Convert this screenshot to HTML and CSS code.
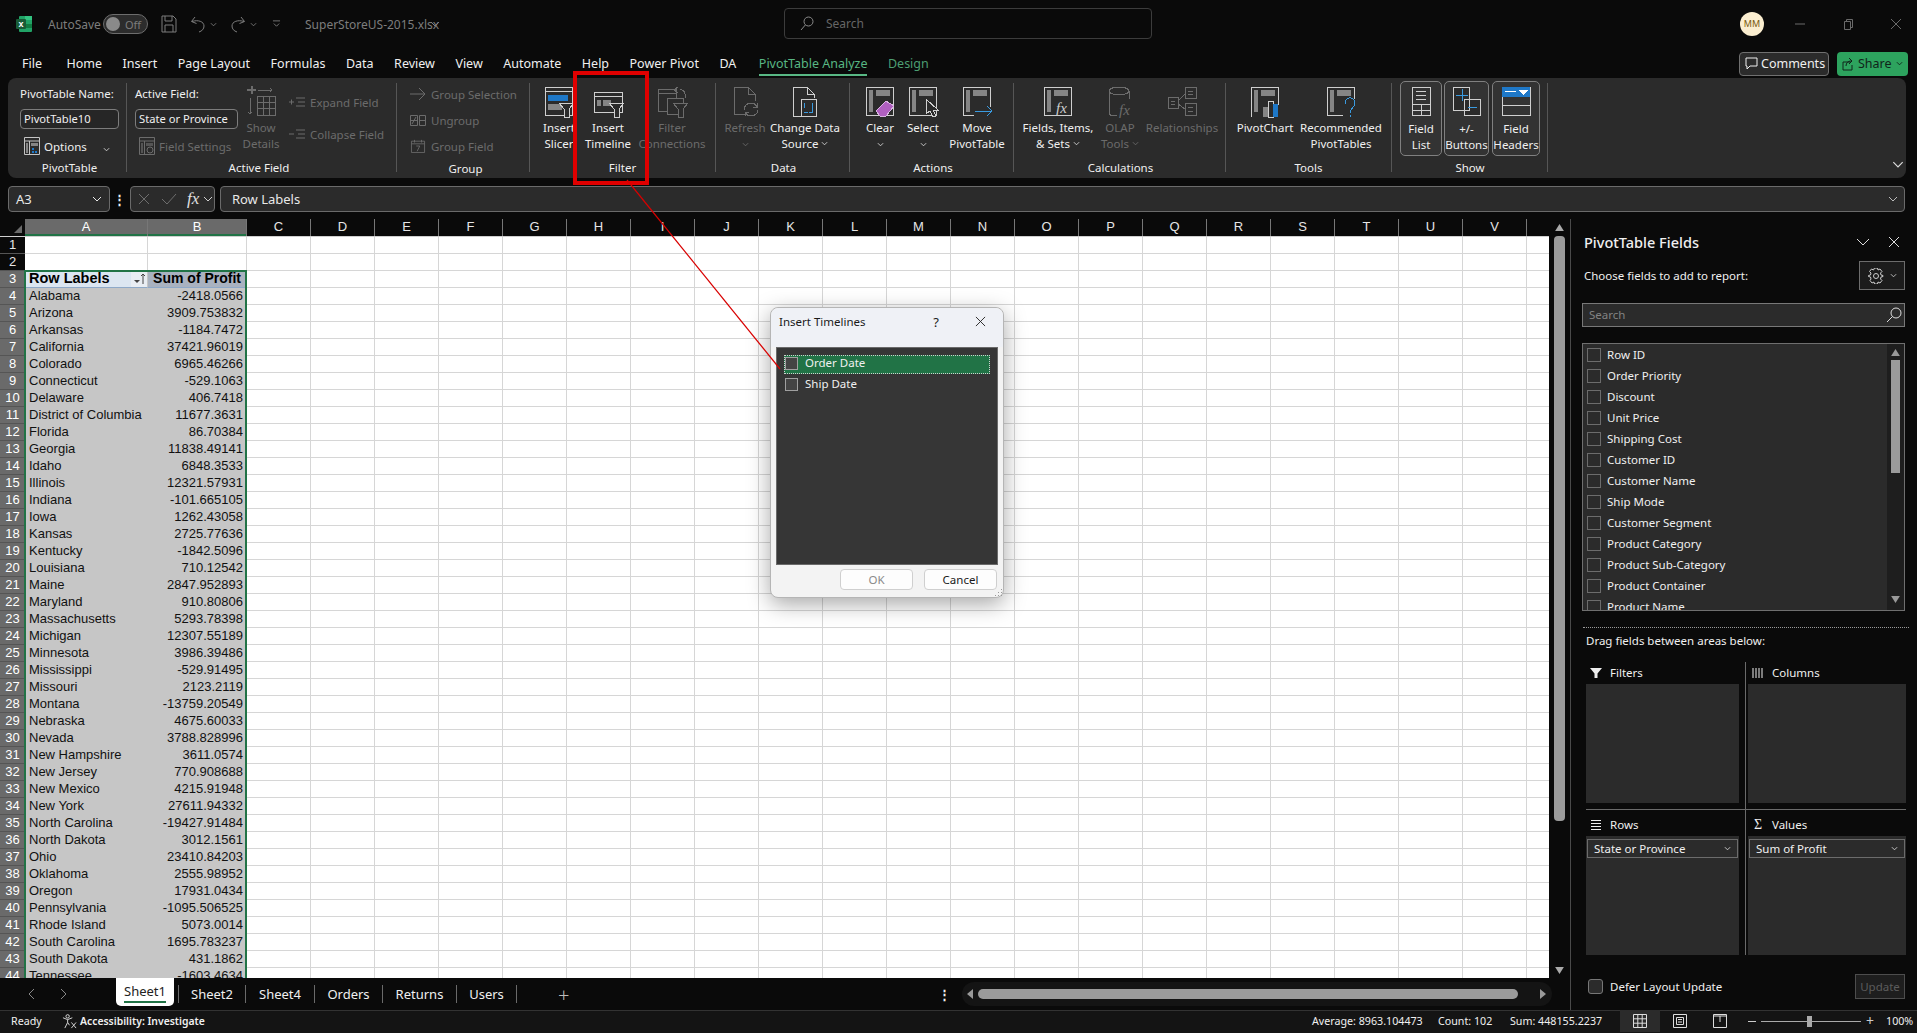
FILE: index.html
```html
<!DOCTYPE html>
<html lang="en">
<head>
    <meta charset="UTF-8">
    <title>SuperStoreUS-2015.xlsx - Excel</title>
    <link rel="stylesheet" href="styles.css">
</head>
<body>

    <!-- title bar -->
    <div class="titlebar">
        <svg class="xl-logo" viewBox="0 0 16 16"><rect x="3" width="13" height="16" rx="1" fill="#21a366"/><rect x="3" y="8" width="13" height="4" fill="#107c41"/><rect x="9" y="0" width="7" height="4" fill="#33c481"/><rect y="3" width="10" height="10" rx="1" fill="#185c37"/><text x="5" y="11" class="xl-x">x</text></svg>
        <span class="autosave">AutoSave</span>
        <span class="toggle"><i></i><b>Off</b></span>
        <svg class="qa save" viewBox="0 0 16 18"><path d="M1 1h11l3 3v13H1zM4 1v5h7V1M4 17v-7h8v7"/></svg>
        <svg class="qa undo" viewBox="0 0 16 18"><path d="M5 2L1.500 6.500l5 2M2 6.500c6-2 12 0 12 4.500 0 3-2 5-5 6"/></svg>
        <svg class="qa-chev" viewBox="0 0 8 5"><path d="M1 1l3 3 3-3"/></svg>
        <svg class="qa redo" viewBox="0 0 16 18"><path d="M11 2l3.500 4.500-5 2M14 6.500c-6-2-12 0-12 4.500 0 3 2 5 5 6"/></svg>
        <svg class="qa-chev" viewBox="0 0 8 5"><path d="M1 1l3 3 3-3"/></svg>
        <svg class="qa-more" viewBox="0 0 10 9"><path d="M1 1h8M2 4l3 3 3-3"/></svg>
        <span class="filename">SuperStoreUS-2015.xlsx</span>
        <svg class="qa-chev file-chev" viewBox="0 0 10 6"><path d="M1 1l4 4 4-4"/></svg>
        <div class="search">
            <svg viewBox="0 0 14 15"><circle cx="8.500" cy="5.500" r="4.500"/><path d="M5.300 9L1 14"/></svg>
            <span>Search</span>
        </div>
        <div class="avatar">MM</div>
        <div class="winctl">
            <svg viewBox="0 0 12 12"><path d="M1 6h10"/></svg>
            <svg viewBox="0 0 12 12"><path d="M2.500 3.500h6v8h-6zM4.500 3.500v-2h6v8h-2"/></svg>
            <svg viewBox="0 0 12 12"><path d="M1 1l10 10M11 1L1 11"/></svg>
        </div>
    </div>

    <!-- ribbon tabs -->
    <div class="tabs">
        <span class="tab-file">File</span><span>Home</span><span>Insert</span><span>Page Layout</span><span>Formulas</span><span>Data</span><span>Review</span><span>View</span><span>Automate</span><span>Help</span><span>Power Pivot</span><span>DA</span>
        <span class="tab-active">PivotTable Analyze</span><span class="tab-ctx">Design</span>
        <div class="tabs-right">
            <div class="comments">
                <svg viewBox="0 0 13 13"><path d="M1 1h11v8H5l-3 3V9H1z"/></svg>Comments
            </div>
            <div class="share">
                <svg viewBox="0 0 12 14"><path d="M8 5H1v8h9V8M4 9c0-3 2-5 5-5M7 1l3 3-3 3"/></svg>Share
                <svg class="share-chev" viewBox="0 0 8 5"><path d="M1 1l3 3 3-3"/></svg>
            </div>
        </div>
    </div>

    <!-- ribbon -->
    <div class="ribbon">

        <div class="group g-pivot">
            <div class="group-body col">
                <div class="mini-label">PivotTable Name:</div>
                <div class="mini-input w-name">PivotTable10</div>
                <div class="mini-row options">
                    <svg class="mini-ico" viewBox="0 0 16 18"><path d="M.500.500h15v17H.500zM.500 4h15M5.500 4v13.500"/><path class="grey" d="M2 6h2v10H2zM7 6h7v3H7z"/><path class="blue" d="M8 11h2v2H8zM11 14h2v2h-2zM8 14h2v2H8z"/></svg>
                    <span>Options</span>
                    <svg class="small-chev opt-chev" viewBox="0 0 8 5"><path d="M1 1l3 3 3-3"/></svg>
                </div>
            </div>
            <div class="group-label">PivotTable</div>
        </div>

        <div class="group g-field">
            <div class="group-body">
                <div class="col field-col">
                    <div class="mini-label">Active Field:</div>
                    <div class="mini-input w-field">State or Province</div>
                    <div class="mini-row off settings">
                        <svg class="mini-ico" viewBox="0 0 16 18"><path d="M.500.500h15v17H.500zM.500 4h15M5.500 4v13.500"/><path class="grey" d="M2 6h2v10H2zM7 6h7v3H7z"/><circle cx="11" cy="13" r="3"/></svg>
                        <span>Field Settings</span>
                    </div>
                </div>
                <div class="bigbtn off w46">
                    <svg class="ico" viewBox="0 0 34 32"><path class="plus" d="M3 4h9M7.500 0v8"/><path d="M14 4h14M26 2l2 2-2 2M6 12v16M4 26l2 2 2-2M13 10h18v19H13zM13 16h18M13 22h18M19 10v19M25 10v19"/></svg>
                    <span>Show</span><span>Details</span>
                </div>
                <div class="col expand-col">
                    <div class="mini-row off"><svg class="mini-ico wide" viewBox="0 0 16 14"><path d="M0 7h5M2.500 4.500v5M7 3h9M9 7h7M7 11h9"/></svg><span>Expand Field</span></div>
                    <div class="mini-row off"><svg class="mini-ico wide" viewBox="0 0 16 14"><path d="M0 7h5M7 3h9M9 7h7M7 11h9"/></svg><span>Collapse Field</span></div>
                </div>
            </div>
            <div class="group-label">Active Field</div>
        </div>

        <div class="group g-group">
            <div class="group-body col group-col">
                <div class="mini-row off"><svg class="mini-ico wide" viewBox="0 0 16 14"><path d="M0 7h15M9 1l6 6-6 6"/></svg><span>Group Selection</span></div>
                <div class="mini-row off"><svg class="mini-ico wide" viewBox="0 0 16 14"><path d="M.500 2.500h7v10h-7zM9.500 2.500h6v10h-6zM9.500 7.500h6M.500 7.500h7M2 11l4-7"/></svg><span>Ungroup</span></div>
                <div class="mini-row off"><svg class="mini-ico wide" viewBox="0 0 16 16"><path d="M.500 2.500h15v13H.500zM.500 5.500h15M4 1v3M12 1v3M6 8h4l-3 6"/></svg><span>Group Field</span></div>
            </div>
            <div class="group-label">Group</div>
        </div>

        <div class="group g-filter">
            <div class="group-body">
                <div class="bigbtn w50">
                    <svg class="ico" viewBox="0 0 34 32"><path d="M3 1h27v28H3zM3 5h27"/><rect class="blue" x="6" y="9" width="20" height="6"/><rect class="grey" x="6" y="18" width="14" height="6"/><path class="funnel" d="M17 17h15l-5 6v8h-5v-8z"/></svg>
                    <span>Insert</span><span>Slicer</span>
                </div>
                <div class="bigbtn w48">
                    <svg class="ico" viewBox="0 0 34 32"><path d="M3 6h28v20H3zM3 10h28"/><rect class="grey" x="6" y="14" width="4" height="6"/><rect class="grey" x="12" y="14" width="8" height="6"/><path class="funnel" d="M18 17h15l-5 6v8h-5v-8z"/></svg>
                    <span>Insert</span><span>Timeline</span>
                </div>
                <div class="bigbtn off w80">
                    <svg class="ico" viewBox="0 0 34 32"><path d="M3 3h18v22H3zM3 7h18M25 3c4 1 6 4 5 9M19 4l4-3M19 4l4 3"/><path class="funnel" d="M12 12h16v16H12z"/><path class="funnel" d="M18 17h15l-5 6v8h-5v-8z"/></svg>
                    <span>Filter</span><span>Connections</span>
                </div>
            </div>
            <div class="group-label filter-label">Filter</div>
        </div>

        <div class="group g-data">
            <div class="group-body">
                <div class="bigbtn off w50">
                    <svg class="ico" viewBox="0 0 34 32"><path d="M18 28H6V1h14l7 7v7M20 1v7h7M16 24c0-4 3-7 7-7 3 0 5 2 6 4M30 24c0 3-3 6-7 6-3 0-5-2-6-4M29 17v4h-4M17 30v-4h4"/></svg>
                    <span>Refresh</span><svg class="small-chev" viewBox="0 0 8 5"><path d="M1 1l3 3 3-3"/></svg>
                </div>
                <div class="bigbtn w70">
                    <svg class="ico" viewBox="0 0 34 32"><path d="M14 30H5V1h14l7 7v4M19 1v7h7"/><path d="M13 13h15v17H13z"/><path class="blue-line" d="M16 22v-5M16 26h4M24 17v9h-3"/></svg>
                    <span>Change Data</span><span>Source <svg class="small-chev inl" viewBox="0 0 8 5"><path d="M1 1l3 3 3-3"/></svg></span>
                </div>
            </div>
            <div class="group-label">Data</div>
        </div>

        <div class="group g-actions">
            <div class="group-body">
                <div class="bigbtn w44">
                    <svg class="ico" viewBox="0 0 34 32"><path d="M3 1h27v28H3z"/><rect class="grey" x="6" y="4" width="4" height="22"/><rect class="grey" x="13" y="4" width="14" height="6"/><path class="eraser" d="M13 25l10-10 8 5-8 10h-6z"/></svg>
                    <span>Clear</span><svg class="small-chev" viewBox="0 0 8 5"><path d="M1 1l3 3 3-3"/></svg>
                </div>
                <div class="bigbtn w42">
                    <svg class="ico" viewBox="0 0 34 32"><path d="M3 1h27v28H3z"/><rect class="grey" x="6" y="4" width="4" height="22"/><rect class="grey" x="13" y="4" width="14" height="6"/><path class="funnel" d="M20 13v15l4-3 3 6 3-1-3-6h5z"/></svg>
                    <span>Select</span><svg class="small-chev" viewBox="0 0 8 5"><path d="M1 1l3 3 3-3"/></svg>
                </div>
                <div class="bigbtn w66">
                    <svg class="ico" viewBox="0 0 34 32"><path d="M3 1h27v28H3z"/><rect class="grey" x="6" y="4" width="4" height="22"/><rect class="grey" x="13" y="4" width="14" height="6"/><path class="funnel no-line" d="M14 21h20v9H14z"/><path class="blue-line" d="M15 25h17M27 20l5 5-5 5"/></svg>
                    <span>Move</span><span>PivotTable</span>
                </div>
            </div>
            <div class="group-label">Actions</div>
        </div>

        <div class="group g-calc">
            <div class="group-body">
                <div class="bigbtn w80">
                    <svg class="ico" viewBox="0 0 34 32"><path d="M3 1h27v28H3z"/><rect class="grey" x="6" y="4" width="4" height="22"/><rect class="grey" x="13" y="4" width="14" height="6"/><text x="15" y="27" class="fx-small">fx</text></svg>
                    <span>Fields, Items,</span><span>&amp; Sets <svg class="small-chev inl" viewBox="0 0 8 5"><path d="M1 1l3 3 3-3"/></svg></span>
                </div>
                <div class="bigbtn off w44">
                    <svg class="ico" viewBox="0 0 34 32"><ellipse cx="16" cy="5" rx="10" ry="4"/><path d="M6 5v22c0 2 3 3 8 3M26 5v8"/><text x="16" y="29" class="fx-small">fx</text></svg>
                    <span>OLAP</span><span>Tools <svg class="small-chev inl" viewBox="0 0 8 5"><path d="M1 1l3 3 3-3"/></svg></span>
                </div>
                <div class="bigbtn off w80">
                    <svg class="ico" viewBox="0 0 34 32"><path d="M3 11h10v11H3zM20 1h11v11H20zM20 17h11v12H20zM13 15l7-7M13 18l7 5M6 15h4M6 18h4M23 5h5M23 8h5M23 21h5M23 25h5"/></svg>
                    <span>Relationships</span>
                </div>
            </div>
            <div class="group-label">Calculations</div>
        </div>

        <div class="group g-tools">
            <div class="group-body">
                <div class="bigbtn w64">
                    <svg class="ico" viewBox="0 0 34 32"><path d="M4 30H3V1h27v18"/><rect class="grey" x="6" y="4" width="4" height="22"/><rect class="grey" x="13" y="4" width="14" height="6"/><rect class="grey" x="15" y="21" width="5" height="10"/><path d="M20 15h5v16h-5z"/><rect class="blue" x="25" y="18" width="5" height="13"/></svg>
                    <span>PivotChart</span>
                </div>
                <div class="bigbtn w88">
                    <svg class="ico" viewBox="0 0 34 32"><path d="M19 29H3V1h27v12"/><rect class="grey" x="6" y="4" width="4" height="22"/><rect class="grey" x="13" y="4" width="14" height="6"/><path class="blue-line" d="M21 18c0-8 10-8 10-1 0 5-5 5-5 10M26 29v2"/></svg>
                    <span>Recommended</span><span>PivotTables</span>
                </div>
            </div>
            <div class="group-label">Tools</div>
        </div>

        <div class="group g-show">
            <div class="group-body">
                <div class="bigbtn toggled w42">
                    <svg class="ico" viewBox="0 0 34 32"><path d="M8 1h18v28H8zM8 18h18M8 24h18M17 18v11M12 5h10M12 9h10M12 13h10"/></svg>
                    <span>Field</span><span>List</span>
                </div>
                <div class="bigbtn toggled w45">
                    <svg class="ico" viewBox="0 0 34 32"><path d="M3 1h16v23H3zM14 13h16v16H14z" class="white-fill"/><path class="blue-line" d="M6 9h12M12 3v12M18 21h9"/></svg>
                    <span>+/-</span><span>Buttons</span>
                </div>
                <div class="bigbtn toggled w48">
                    <svg class="ico" viewBox="0 0 34 32"><path d="M3 1h28v28H3zM3 19h28"/><rect class="blue" x="3" y="1" width="28" height="10"/><path class="white-solid" d="M20 4h9l-4.500 5z"/><path class="white-line" d="M6 5h11"/></svg>
                    <span>Field</span><span>Headers</span>
                </div>
            </div>
            <div class="group-label">Show</div>
        </div>

        <svg class="ribbon-collapse" viewBox="0 0 10 6"><path d="M1 1l4 4 4-4"/></svg>
    </div>

    <!-- formula bar -->
    <div class="formula">
        <div class="fbox namebox">A3<svg viewBox="0 0 10 6"><path d="M1 1l4 4 4-4"/></svg></div>
        <div class="fdots">&#8942;</div>
        <div class="fbox fxbox">
            <svg class="fx-x" viewBox="0 0 12 12"><path d="M1 1l10 10M11 1L1 11"/></svg>
            <svg class="fx-check" viewBox="0 0 16 12"><path d="M1 6l5 5L15 1"/></svg>
            <i>fx</i>
            <svg class="fx-chev" viewBox="0 0 10 6"><path d="M1 1l4 4 4-4"/></svg>
        </div>
        <div class="fbox fvalue">Row Labels<svg viewBox="0 0 10 6"><path d="M1 1l4 4 4-4"/></svg></div>
    </div>

    <div class="work">
        <div class="left">
            <div class="sheetwrap">
                <div class="sheet">
                    <div class="colheads">
                        <div class="corner"></div>
                        <div class="ch ch-a sel">A</div><div class="ch ch-b sel">B</div>
                        <div class="ch">C</div><div class="ch">D</div><div class="ch">E</div><div class="ch">F</div><div class="ch">G</div><div class="ch">H</div><div class="ch">I</div><div class="ch">J</div><div class="ch">K</div><div class="ch">L</div><div class="ch">M</div><div class="ch">N</div><div class="ch">O</div><div class="ch">P</div><div class="ch">Q</div><div class="ch">R</div><div class="ch">S</div><div class="ch">T</div><div class="ch">U</div><div class="ch">V</div>
                    </div>
                    <div class="row"><span class="rh">1</span><span class="a"></span><span class="b"></span></div>
                    <div class="row"><span class="rh">2</span><span class="a"></span><span class="b"></span></div>
                    <div class="row on head"><span class="rh">3</span><span class="a">Row Labels<svg class="pf-btn" viewBox="0 0 16 16"><path d="M3 9h6l-3 3z" fill="#444"/><path d="M12 13V3M10 5l2-2 2 2" stroke="#444" fill="none"/></svg></span><span class="b">Sum of Profit</span></div>
                    <div class="row on"><span class="rh">4</span><span class="a">Alabama</span><span class="b">-2418.0566</span></div>
                    <div class="row on"><span class="rh">5</span><span class="a">Arizona</span><span class="b">3909.753832</span></div>
                    <div class="row on"><span class="rh">6</span><span class="a">Arkansas</span><span class="b">-1184.7472</span></div>
                    <div class="row on"><span class="rh">7</span><span class="a">California</span><span class="b">37421.96019</span></div>
                    <div class="row on"><span class="rh">8</span><span class="a">Colorado</span><span class="b">6965.46266</span></div>
                    <div class="row on"><span class="rh">9</span><span class="a">Connecticut</span><span class="b">-529.1063</span></div>
                    <div class="row on"><span class="rh">10</span><span class="a">Delaware</span><span class="b">406.7418</span></div>
                    <div class="row on"><span class="rh">11</span><span class="a">District of Columbia</span><span class="b">11677.3631</span></div>
                    <div class="row on"><span class="rh">12</span><span class="a">Florida</span><span class="b">86.70384</span></div>
                    <div class="row on"><span class="rh">13</span><span class="a">Georgia</span><span class="b">11838.49141</span></div>
                    <div class="row on"><span class="rh">14</span><span class="a">Idaho</span><span class="b">6848.3533</span></div>
                    <div class="row on"><span class="rh">15</span><span class="a">Illinois</span><span class="b">12321.57931</span></div>
                    <div class="row on"><span class="rh">16</span><span class="a">Indiana</span><span class="b">-101.665105</span></div>
                    <div class="row on"><span class="rh">17</span><span class="a">Iowa</span><span class="b">1262.43058</span></div>
                    <div class="row on"><span class="rh">18</span><span class="a">Kansas</span><span class="b">2725.77636</span></div>
                    <div class="row on"><span class="rh">19</span><span class="a">Kentucky</span><span class="b">-1842.5096</span></div>
                    <div class="row on"><span class="rh">20</span><span class="a">Louisiana</span><span class="b">710.12542</span></div>
                    <div class="row on"><span class="rh">21</span><span class="a">Maine</span><span class="b">2847.952893</span></div>
                    <div class="row on"><span class="rh">22</span><span class="a">Maryland</span><span class="b">910.80806</span></div>
                    <div class="row on"><span class="rh">23</span><span class="a">Massachusetts</span><span class="b">5293.78398</span></div>
                    <div class="row on"><span class="rh">24</span><span class="a">Michigan</span><span class="b">12307.55189</span></div>
                    <div class="row on"><span class="rh">25</span><span class="a">Minnesota</span><span class="b">3986.39486</span></div>
                    <div class="row on"><span class="rh">26</span><span class="a">Mississippi</span><span class="b">-529.91495</span></div>
                    <div class="row on"><span class="rh">27</span><span class="a">Missouri</span><span class="b">2123.2119</span></div>
                    <div class="row on"><span class="rh">28</span><span class="a">Montana</span><span class="b">-13759.20549</span></div>
                    <div class="row on"><span class="rh">29</span><span class="a">Nebraska</span><span class="b">4675.60033</span></div>
                    <div class="row on"><span class="rh">30</span><span class="a">Nevada</span><span class="b">3788.828996</span></div>
                    <div class="row on"><span class="rh">31</span><span class="a">New Hampshire</span><span class="b">3611.0574</span></div>
                    <div class="row on"><span class="rh">32</span><span class="a">New Jersey</span><span class="b">770.908688</span></div>
                    <div class="row on"><span class="rh">33</span><span class="a">New Mexico</span><span class="b">4215.91948</span></div>
                    <div class="row on"><span class="rh">34</span><span class="a">New York</span><span class="b">27611.94332</span></div>
                    <div class="row on"><span class="rh">35</span><span class="a">North Carolina</span><span class="b">-19427.91484</span></div>
                    <div class="row on"><span class="rh">36</span><span class="a">North Dakota</span><span class="b">3012.1561</span></div>
                    <div class="row on"><span class="rh">37</span><span class="a">Ohio</span><span class="b">23410.84203</span></div>
                    <div class="row on"><span class="rh">38</span><span class="a">Oklahoma</span><span class="b">2555.98952</span></div>
                    <div class="row on"><span class="rh">39</span><span class="a">Oregon</span><span class="b">17931.0434</span></div>
                    <div class="row on"><span class="rh">40</span><span class="a">Pennsylvania</span><span class="b">-1095.506525</span></div>
                    <div class="row on"><span class="rh">41</span><span class="a">Rhode Island</span><span class="b">5073.0014</span></div>
                    <div class="row on"><span class="rh">42</span><span class="a">South Carolina</span><span class="b">1695.783237</span></div>
                    <div class="row on"><span class="rh">43</span><span class="a">South Dakota</span><span class="b">431.1862</span></div>
                    <div class="row on"><span class="rh">44</span><span class="a">Tennessee</span><span class="b">-1603.4634</span></div>
                    <div class="selbox"></div>
                </div>
                <div class="vscroll">
                    <svg viewBox="0 0 10 8"><path d="M5 0l5 8H0z"/></svg>
                    <div class="vthumb"></div>
                    <svg viewBox="0 0 10 8"><path d="M0 0h10L5 8z"/></svg>
                </div>
            </div>

            <div class="sheettabs">
                <svg class="nav-arrow nav-first" viewBox="0 0 7 12"><path d="M6 1L1 6l5 5"/></svg>
                <svg class="nav-arrow" viewBox="0 0 7 12"><path d="M1 1l5 5-5 5"/></svg>
                <div class="stab stab-on">Sheet1</div>
                <div class="stab s2">Sheet2</div>
                <div class="stab s4">Sheet4</div>
                <div class="stab s-orders">Orders</div>
                <div class="stab s-returns">Returns</div>
                <div class="stab s-users">Users</div>
                <div class="addsheet">+</div>
                <div class="tabdots">&#8942;</div>
                <div class="hscroll">
                    <svg viewBox="0 0 6 10"><path d="M6 0v10L0 5z"/></svg>
                    <div class="hthumb"></div>
                    <svg viewBox="0 0 6 10"><path d="M0 0l6 5-6 5z"/></svg>
                </div>
            </div>
        </div>

        <!-- field list pane -->
        <div class="pane">
            <div class="pane-head">
                <span class="pane-title">PivotTable Fields</span>
                <svg class="pane-chev" viewBox="0 0 14 8"><path d="M1 1l6 6 6-6"/></svg>
                <svg class="pane-x" viewBox="0 0 12 12"><path d="M1 1l10 10M11 1L1 11"/></svg>
            </div>
            <div class="pane-choose">
                <span>Choose fields to add to report:</span>
                <div class="gearbtn">
                    <svg viewBox="0 0 16 16"><path d="M6.500 1h3l.5 2 2-1 2 2.500-1.500 1.500.5 2 2 .5v1l-2 .5-.5 2 1.500 1.500-2 2.500-2-1-.5 2h-3l-.5-2-2 1-2-2.500L3 12l-.5-2-2-.5v-1l2-.5L3 6 1.500 4.500l2-2.500 2 1z" transform="translate(0 -1)"/><circle cx="8" cy="8" r="2.500"/></svg>
                    <svg class="small-chev" viewBox="0 0 8 5"><path d="M1 1l3 3 3-3"/></svg>
                </div>
            </div>
            <div class="pane-search">Search
                <svg viewBox="0 0 16 16"><circle cx="10" cy="6" r="5"/><path d="M6.500 9.500L1 15"/></svg>
            </div>
            <div class="fieldlist">
                <div class="fields">
                    <label><i></i>Row ID</label>
                    <label><i></i>Order Priority</label>
                    <label><i></i>Discount</label>
                    <label><i></i>Unit Price</label>
                    <label><i></i>Shipping Cost</label>
                    <label><i></i>Customer ID</label>
                    <label><i></i>Customer Name</label>
                    <label><i></i>Ship Mode</label>
                    <label><i></i>Customer Segment</label>
                    <label><i></i>Product Category</label>
                    <label><i></i>Product Sub-Category</label>
                    <label><i></i>Product Container</label>
                    <label><i></i>Product Name</label>
                </div>
                <div class="list-scroll">
                    <svg viewBox="0 0 10 8"><path d="M5 0l5 8H0z"/></svg>
                    <div class="list-thumb"></div>
                    <svg viewBox="0 0 10 8"><path d="M0 0h10L5 8z"/></svg>
                </div>
            </div>
            <div class="pane-dotted"></div>
            <div class="pane-drag">Drag fields between areas below:</div>
            <div class="areas">
                <div class="area area-l area-top">
                    <div class="area-head"><svg viewBox="0 0 12 12"><path d="M0 1h12L7.500 6.500V11H4.500V6.500z" class="solid"/></svg>Filters</div>
                    <div class="area-box"></div>
                </div>
                <div class="area area-top">
                    <div class="area-head"><svg viewBox="0 0 12 12"><path d="M1 1v10M4 1v10M7 1v10M10 1v10" class="bars"/></svg>Columns</div>
                    <div class="area-box"></div>
                </div>
                <div class="area area-l">
                    <div class="area-head"><svg viewBox="0 0 12 12"><path d="M1 1.500h10M1 4.500h10M1 7.500h10M1 10.500h10" class="bars"/></svg>Rows</div>
                    <div class="area-box"><div class="area-item">State or Province<svg class="small-chev" viewBox="0 0 8 5"><path d="M1 1l3 3 3-3"/></svg></div></div>
                </div>
                <div class="area">
                    <div class="area-head"><span class="sigma">&Sigma;</span>Values</div>
                    <div class="area-box"><div class="area-item">Sum of Profit<svg class="small-chev" viewBox="0 0 8 5"><path d="M1 1l3 3 3-3"/></svg></div></div>
                </div>
            </div>
            <div class="pane-foot">
                <i class="defer-box"></i><span>Defer Layout Update</span>
                <div class="update">Update</div>
            </div>
        </div>
    </div>

    <!-- status bar -->
    <div class="status">
        <span class="st-ready">Ready</span>
        <svg class="st-acc" viewBox="0 0 16 16"><circle cx="6" cy="2.500" r="1.800"/><path d="M1 4l5 2 5-2M6 6v3l-3 6M6 9l2 3M10 9l5 6M15 9l-5 6"/></svg>
        <span class="st-acc-text">Accessibility: Investigate</span>
        <span class="st-avg">Average: 8963.104473</span>
        <span class="st-count">Count: 102</span>
        <span class="st-sum">Sum: 448155.2237</span>
        <div class="st-view st-view-on"><svg viewBox="0 0 14 14"><path d="M.500.500h13v13H.500zM.500 4.800h13M.500 9.200h13M4.800.500v13M9.200.500v13"/></svg></div>
        <div class="st-view"><svg viewBox="0 0 14 14"><path d="M.500.500h13v13H.500zM3.500 3.500h7v7h-7zM5 5.500h4M5 8h4"/></svg></div>
        <div class="st-view"><svg viewBox="0 0 14 14"><path d="M.500.500h13v13H.500zM.500 2h13M7 2v6"/></svg></div>
        <div class="zoomer">
            <span class="z-minus"></span>
            <div class="z-track"><i></i></div>
            <span class="z-plus">+</span>
            <span class="z-val">100%</span>
        </div>
    </div>

    <!-- insert timelines dialog -->
    <div class="dialog">
        <div class="dlg-title">
            <span>Insert Timelines</span>
            <b>?</b>
            <svg viewBox="0 0 12 12"><path d="M1 1l10 10M11 1L1 11"/></svg>
        </div>
        <div class="dlg-list">
            <div class="dlg-row dlg-row-on"><i></i>Order Date</div>
            <div class="dlg-row"><i></i>Ship Date</div>
        </div>
        <div class="dlg-btns">
            <div class="dlg-btn dlg-off">OK</div>
            <div class="dlg-btn">Cancel</div>
        </div>
        <svg class="dlg-grip" viewBox="0 0 9 9"><path d="M7 1h1v1H7zM4 4h1v1H4zM7 4h1v1H7zM1 7h1v1H1zM4 7h1v1H4zM7 7h1v1H7z"/></svg>
    </div>

    <!-- red markup on top of the screenshot -->
    <div class="markbox"></div>
    <svg class="markline" viewBox="0 0 1917 1033"><path d="M627 180L780 369"/></svg>

</body>
</html>
```

FILE: styles.css
```css
/* General */
html, body {
    margin: 0;
    padding: 0;
    height: 1033px;
    overflow: hidden;
}

body {
    position: relative;
    background: #0a0a0a;
    color: #f0f0f0;
    font-family: "Noto Sans", sans-serif;
    font-size: 12px;
    display: flex;
    flex-direction: column;
}

svg {
    fill: none;
    stroke: currentColor;
    flex: none;
}

/* Title bar */
.titlebar {
    height: 47px;
    box-sizing: border-box;
    padding-top: 1px;
    display: flex;
    align-items: center;
    color: #7d7d7d;
    position: relative;
}

.xl-logo {
    width: 16px;
    height: 16px;
    margin-left: 16px;
    stroke: none;
}

.xl-x {
    fill: #fff;
    font: bold 9px "Liberation Sans", sans-serif;
    text-anchor: middle;
}

.autosave {
    margin-left: 16px;
    width: 49px;
}

.toggle {
    margin-left: 6px;
    width: 45px;
    height: 20px;
    box-sizing: border-box;
    border: 1px solid #6d6d6d;
    background: #2c2c2c;
    border-radius: 10px;
    display: flex;
    align-items: center;
}

.toggle i {
    width: 14px;
    height: 14px;
    border-radius: 50%;
    background: #8a8a8a;
    margin-left: 2px;
}

.toggle b {
    font-weight: normal;
    font-size: 11px;
    margin-left: 5px;
}

.qa {
    width: 16px;
    height: 18px;
}

.save { margin-left: 13px; }
.undo { margin-left: 13px; }
.redo { margin-left: 13px; }

.qa-chev {
    width: 7px;
    height: 5px;
    margin-left: 4px;
}

.qa-more {
    width: 9px;
    height: 8px;
    margin-left: 15px;
}

.filename {
    margin-left: 24px;
    width: 121px;
    white-space: nowrap;
}

.file-chev {
    width: 10px;
    height: 6px;
}

.search {
    position: absolute;
    left: 784px;
    top: 8px;
    width: 368px;
    height: 31px;
    box-sizing: border-box;
    border: 1px solid #3c3c3c;
    border-radius: 4px;
    display: flex;
    align-items: center;
    color: #666;
}

.search svg {
    width: 14px;
    height: 15px;
    margin: 0 12px 0 15px;
    color: #8a8a8a;
}

.avatar {
    position: absolute;
    left: 1740px;
    top: 12px;
    width: 24px;
    height: 24px;
    border-radius: 50%;
    background: #fbeed0;
    color: #7a5a10;
    font-size: 9px;
    line-height: 24px;
    text-align: center;
}

.winctl {
    position: absolute;
    left: 1794px;
    top: 18px;
    display: flex;
    gap: 36px;
    color: #6a6a6a;
}

.winctl svg {
    width: 12px;
    height: 12px;
}

/* Tabs */
.tabs {
    height: 31px;
    box-sizing: border-box;
    padding: 2px 0 0 22px;
    display: flex;
    align-items: center;
    gap: 20.5px;
    font-size: 12.5px;
    white-space: nowrap;
    position: relative;
}

.tab-file { margin-right: 4px; }

.tab-active {
    color: #58b784;
    margin-left: 2px;
    position: relative;
}

.tab-active::after {
    content: "";
    position: absolute;
    left: 0;
    right: 0;
    bottom: -4px;
    height: 2px;
    background: #58b784;
}

.tab-ctx { color: #4d9e72; }

.tabs-right {
    margin-left: auto;
    margin-right: 9px;
    display: flex;
    gap: 8px;
}

.comments, .share {
    height: 24px;
    box-sizing: border-box;
    border-radius: 4px;
    display: flex;
    align-items: center;
}

.comments {
    width: 90px;
    background: #2b2b2b;
    border: 1px solid #707070;
    padding-left: 5px;
    gap: 3px;
}

.comments svg {
    width: 13px;
    height: 13px;
}

.share {
    width: 71px;
    background: #2da35e;
    color: #10241a;
    padding-left: 5px;
    gap: 4px;
}

.share svg {
    width: 12px;
    height: 14px;
}

.share .share-chev {
    width: 7px;
    height: 5px;
}

/* Ribbon */
.ribbon {
    height: 100px;
    margin: 0 11px 0 8px;
    background: #2b2b2b;
    border-radius: 8px;
    display: flex;
    align-items: flex-start;
    position: relative;
    font-size: 11.5px;
}

.group {
    margin-top: 5px;
    height: 89px;
    box-sizing: border-box;
    border-right: 1px solid #565656;
    display: flex;
    flex-direction: column;
    flex: none;
}

.g-pivot { width: 119px; padding-left: 12px; }
.g-field { width: 270px; padding-left: 8px; }
.g-group { width: 133px; padding-left: 13px; }
.g-filter { width: 186px; padding-left: 4px; }
.g-data { width: 134px; padding-left: 4px; }
.g-actions { width: 164px; padding-left: 8px; }
.g-calc { width: 212px; padding-left: 4px; }
.g-tools { width: 166px; padding-left: 7px; }
.g-show { width: 156px; padding-left: 8px; }

.group-body {
    height: 77px;
    display: flex;
    flex: none;
}

.col {
    display: flex;
    flex-direction: column;
}

.group-label {
    height: 16px;
    line-height: 16px;
    text-align: center;
    font-size: 11.5px;
    white-space: nowrap;
}

.g-pivot .group-label { margin-left: -7px; }
.g-field .group-label { margin-left: -8px; margin-right: 5px; }
.g-group .group-label { margin-left: -8px; }
.filter-label { margin-left: -4px; }
.g-data .group-label { margin-right: 2px; }
.g-actions .group-label { margin-right: 5px; }
.g-calc .group-label { margin-right: 2px; }
.g-tools .group-label { margin-right: 7px; }
.g-show .group-label { margin-right: 7px; }

.mini-label {
    height: 18px;
    line-height: 22px;
    white-space: nowrap;
}

.mini-input {
    height: 20px;
    margin-top: 8px;
    box-sizing: border-box;
    border: 1px solid #7c7c7c;
    border-radius: 4px;
    background: #262626;
    line-height: 18px;
    padding-left: 3px;
    white-space: nowrap;
    font-size: 11.2px;
}

.w-name { width: 99px; }
.w-field { width: 103px; }

.mini-row {
    height: 20px;
    display: flex;
    align-items: center;
    white-space: nowrap;
}

.options,
.settings {
    margin-top: 7px;
    padding-left: 4px;
}

.mini-ico {
    width: 16px;
    height: 18px;
    margin-right: 4px;
    color: #c4c4c4;
}

.mini-ico.wide {
    height: 14px;
    margin-right: 5px;
}

.opt-chev { margin: 0 0 0 16px; }

.off { color: #6c6c6c; }
.off .mini-ico { color: #6c6c6c; }

.field-col { width: 103px; }
.expand-col {
    margin-top: 9px;
    margin-left: 5px;
    gap: 12px;
}

.group-col {
    padding-top: 1px;
    gap: 6px;
}

.bigbtn {
    display: flex;
    flex-direction: column;
    align-items: center;
    padding-top: 3px;
    line-height: 16px;
    white-space: nowrap;
    box-sizing: border-box;
    flex: none;
    color: #f0f0f0;
}

.bigbtn.off { color: #6c6c6c; }

.ico {
    width: 34px;
    height: 32px;
    margin-bottom: 2px;
    color: #cfcfcf;
    shape-rendering: crispEdges;
}

.off .ico { color: #6c6c6c; }

.w42 { width: 42px; }
.w44 { width: 44px; }
.w45 { width: 45px; }
.w46 { width: 46px; }
.w48 { width: 48px; }
.w50 { width: 50px; }
.w64 { width: 64px; }
.w66 { width: 66px; }
.w70 { width: 70px; }
.w80 { width: 80px; }
.w88 { width: 88px; }

.grey { fill: #858585; stroke: none; }
.blue { fill: #1e78c8; stroke: none; }
.off .grey { fill: #555; }
.blue-line { stroke: #3a9be0; }
.funnel { fill: #2b2b2b; }
.no-line { stroke: none; }
.eraser { fill: #b05fc0; stroke: #d9b4e2; }
.plus { stroke-width: 2; }
.white-fill { fill: #2b2b2b; }
.white-solid { fill: #fff; stroke: none; }
.white-line { stroke: #fff; }

.fx-small {
    font: italic 15px "Liberation Serif", serif;
    fill: currentColor;
    stroke: none;
}

.small-chev {
    width: 7px;
    height: 5px;
    color: #d8d8d8;
    margin-top: 6px;
}

.off .small-chev { color: #6c6c6c; }

.small-chev.inl {
    margin: 0 0 2px;
}

.toggled {
    margin-top: -2px;
    height: 75px;
    border: 1px solid #808080;
    border-radius: 5px;
    background: #333;
    padding-top: 4px;
}

.toggled .ico { margin-bottom: 3px; }
.w42.toggled { margin-right: 2px; }
.w45.toggled { margin-right: 3px; }

.ribbon-collapse {
    position: absolute;
    left: 1884px;
    top: 83px;
    width: 12px;
    height: 7px;
    color: #ddd;
}

/* Formula bar */
.formula {
    height: 26px;
    margin: 8px 12px 0 8px;
    display: flex;
    font-size: 13px;
}

.fbox {
    box-sizing: border-box;
    height: 26px;
    background: #2b2b2b;
    border: 1px solid #6a6a6a;
    border-radius: 4px;
    display: flex;
    align-items: center;
    color: #e8e8e8;
}

.fbox svg {
    width: 10px;
    height: 6px;
}

.namebox {
    width: 102px;
    padding-left: 7px;
    justify-content: space-between;
    padding-right: 7px;
}

.fdots {
    width: 20px;
    text-align: center;
    line-height: 26px;
    font-weight: bold;
}

.fxbox {
    width: 85px;
    padding-left: 7px;
    color: #6e6e6e;
}

.fxbox .fx-x { width: 12px; height: 12px; }
.fxbox .fx-check { width: 16px; height: 12px; margin-left: 11px; }

.fxbox i {
    font: italic 17px "Liberation Serif", serif;
    color: #e0e0e0;
    margin-left: 10px;
}

.fxbox .fx-chev { margin-left: 4px; color: #cfcfcf; }

.fvalue {
    width: 1686px;
    margin-left: 5px;
    padding: 0 6px 0 11px;
    justify-content: space-between;
}

.fvalue svg { color: #bbb; }

/* Work area */
.work {
    margin-top: 7px;
    height: 791px;
    display: flex;
}

.left {
    width: 1570px;
    display: flex;
    flex-direction: column;
}

.sheetwrap {
    height: 759px;
    display: flex;
    overflow: hidden;
}

.sheet {
    width: 1549px;
    position: relative;
    overflow: hidden;
    font-family: "Liberation Sans", sans-serif;
    font-size: 13px;
    color: #111;
    background: #fff;
}

.colheads {
    display: flex;
    height: 17px;
    background: #0a0a0a;
    border-bottom: 1px solid #cfcfcf;
    color: #e6e6e6;
    font-size: 13px;
}

.corner {
    width: 25px;
    flex: none;
    position: relative;
}

.corner::after {
    content: "";
    position: absolute;
    right: 3px;
    bottom: 3px;
    border-style: solid;
    border-width: 0 0 8px 8px;
    border-color: transparent transparent #6a6a6a transparent;
}

.ch {
    width: 64px;
    flex: none;
    box-sizing: border-box;
    border-right: 1px solid #777;
    text-align: center;
    line-height: 16px;
}

.ch-a { width: 123px; }
.ch-b { width: 99px; }

.ch.sel {
    background: #6a6a6a;
    color: #fff;
    box-shadow: inset 0 -2px 0 #217346;
}

.row {
    display: flex;
    height: 17px;
    box-sizing: border-box;
    border-bottom: 1px solid #d6d6d6;
    line-height: 15px;
    white-space: nowrap;
    background: repeating-linear-gradient(90deg, #fff 0, #fff 63px, #d6d6d6 63px, #d6d6d6 64px);
    background-position: 247px 0;
}

.rh {
    width: 25px;
    flex: none;
    background: #0a0a0a;
    color: #e6e6e6;
    text-align: center;
    margin-bottom: -1px;
    border-bottom: 1px solid #555;
    box-sizing: border-box;
    height: 17px;
}

.a, .b {
    flex: none;
    box-sizing: border-box;
    border-right: 1px solid #d6d6d6;
    background: #fff;
}

.a { width: 123px; padding-left: 4px; }
.b { width: 99px; padding-right: 3px; text-align: right; }

.row.on .rh { background: #6a6a6a; color: #fff; }
.row.on .a,
.row.on .b { background: #c6c6c6; border-color: #c6c6c6; margin-bottom: -1px; }

.row.head { font-weight: bold; font-size: 14.5px; color: #000; }
.row.head .rh { font-weight: normal; font-size: 13px; color: #fff; }
.row.head .a { background: #dce6f1; border-bottom: 1px solid #8ea9c8; display: flex; justify-content: space-between; padding-right: 0; }
.row.head .b { background: #a9b2c0; border-bottom: 1px solid #8ea9c8; padding-right: 5px; font-size: 14px; }

.pf-btn {
    width: 16px;
    height: 16px;
    background: #e9edf3;
    stroke: none;
}

.selbox {
    position: absolute;
    left: 24px;
    top: 51px;
    width: 223px;
    height: 760px;
    box-sizing: border-box;
    border: 2px solid #217346;
    pointer-events: none;
}

/* Scrollbars */
.vscroll {
    width: 21px;
    display: flex;
    flex-direction: column;
    align-items: center;
    padding-top: 5px;
    box-sizing: border-box;
    color: #aaa;
}

.vscroll svg {
    width: 9px;
    height: 7px;
    fill: #aaa;
    stroke: none;
}

.vthumb {
    width: 11px;
    height: 585px;
    margin: 5px 0 146px;
    background: #9b9b9b;
    border-radius: 4px;
}

.sheettabs {
    height: 32px;
    display: flex;
    align-items: center;
    font-size: 13px;
    position: relative;
}

.nav-arrow {
    width: 7px;
    height: 12px;
    margin-left: 25px;
    color: #888;
}

.nav-first { margin-left: 28px; }

.stab {
    height: 18px;
    line-height: 18px;
    text-align: center;
    box-sizing: border-box;
    border-right: 1px solid #6a6a6a;
    white-space: nowrap;
}

.stab-on {
    margin-left: 49px;
    margin-top: -4px;
    width: 58px;
    height: 28px;
    line-height: 26px;
    background: #fff;
    color: #222;
    border: 0;
    border-radius: 0 0 5px 5px;
    position: relative;
}

.stab-on::after {
    content: "";
    position: absolute;
    left: 8px;
    right: 8px;
    bottom: 3px;
    height: 2px;
    background: #217346;
}

.s2 { margin-left: 4px; width: 68px; border-left: 1px solid #6a6a6a; }
.s4 { width: 69px; }
.s-orders { width: 68px; }
.s-returns { width: 74px; }
.s-users { width: 60px; }

.addsheet {
    margin-left: 41px;
    font-size: 20px;
    font-weight: 300;
    color: #bbb;
}

.tabdots {
    position: absolute;
    left: 938px;
    top: 7px;
    line-height: 18px;
    font-weight: bold;
}

.hscroll {
    position: absolute;
    left: 962px;
    top: 4px;
    width: 590px;
    height: 24px;
    background: #141414;
    border-radius: 12px;
    display: flex;
    align-items: center;
    padding: 0 5px;
    box-sizing: border-box;
}

.hscroll svg {
    width: 6px;
    height: 10px;
    fill: #999;
    stroke: none;
}

.hthumb {
    width: 540px;
    height: 10px;
    margin: 0 22px 0 5px;
    background: #9b9b9b;
    border-radius: 5px;
}

/* Field list pane */
.pane {
    width: 346px;
    box-sizing: border-box;
    border-left: 1px solid #4a4a4a;
    padding: 0 11px 0 12px;
    font-size: 11.5px;
}

.pane-head {
    height: 30px;
    padding-top: 8px;
    padding-left: 1px;
    display: flex;
    align-items: center;
}

.pane-title {
    font-size: 14.5px;
    font-weight: 500;
    flex: 1;
}

.pane-chev { width: 14px; height: 8px; margin-right: 18px; color: #ddd; }
.pane-x { width: 12px; height: 12px; margin-right: 5px; color: #ddd; }

.pane-choose {
    display: flex;
    justify-content: space-between;
    align-items: center;
    margin-top: 4px;
    padding-left: 1px;
    height: 29px;
}

.gearbtn {
    width: 46px;
    height: 29px;
    box-sizing: border-box;
    border: 1px solid #6c6c6c;
    background: #1c1c1c;
    display: flex;
    align-items: center;
    justify-content: center;
    gap: 6px;
}

.gearbtn svg {
    width: 16px;
    height: 16px;
    color: #ccc;
}

.gearbtn .small-chev {
    width: 7px;
    height: 5px;
    margin: 0;
}

.pane-search {
    margin: 13px 0 0 -1px;
    height: 24px;
    box-sizing: border-box;
    border: 1px solid #787878;
    background: #2b2b2b;
    color: #828282;
    line-height: 22px;
    padding-left: 6px;
    display: flex;
    justify-content: space-between;
    align-items: center;
    padding-right: 2px;
}

.pane-search svg {
    width: 16px;
    height: 16px;
    color: #ddd;
}

.fieldlist {
    margin: 16px 0 0 -1px;
    height: 268px;
    box-sizing: border-box;
    border: 1px solid #6f6f6f;
    background: #2b2b2b;
    display: flex;
    overflow: hidden;
}

.fields {
    flex: 1;
}

.fields label {
    height: 21px;
    display: flex;
    align-items: center;
    white-space: nowrap;
    color: #f0f0f0;
}

.fields i {
    width: 12px;
    height: 12px;
    border: 1px solid #6c6c6c;
    margin: 0 6px 0 4px;
    flex: none;
}

.list-scroll {
    width: 17px;
    background: #1e1e1e;
    display: flex;
    flex-direction: column;
    align-items: center;
    padding-top: 5px;
    box-sizing: border-box;
    flex: none;
}

.list-scroll svg {
    width: 9px;
    height: 7px;
    fill: #999;
    stroke: none;
}

.list-thumb {
    width: 9px;
    height: 113px;
    margin: 4px 0 123px;
    background: #9b9b9b;
}

.pane-dotted {
    margin-top: 16px;
    margin-right: -4px;
    border-top: 1px dotted #9a9a9a;
}

.pane-drag {
    margin: 4px 0 0 3px;
    height: 17px;
    line-height: 17px;
}

.areas {
    margin-top: 13px;
    margin-left: 3px;
    display: grid;
    grid-template-columns: 160px 160px;
}

.area {
    display: flex;
    flex-direction: column;
    height: 145px;
    padding-top: 4px;
    box-sizing: border-box;
}

.area-top {
    height: 148px;
    padding-top: 0;
    border-bottom: 1px solid #6a6a6a;
}

.area-l {
    border-right: 1px solid #6a6a6a;
    padding-right: 6px;
}

.area:not(.area-l) { padding-left: 2px; }

.area-head {
    height: 22px;
    box-sizing: border-box;
    padding: 0 0 1px 4px;
    display: flex;
    align-items: center;
    gap: 8px;
    flex: none;
}

.area-head svg {
    width: 12px;
    height: 12px;
    color: #eee;
}

.area-head .solid { fill: #eee; stroke: none; }
.area-head .bars { stroke: #eee; }

.sigma {
    width: 12px;
    font-family: "Liberation Serif", serif;
    font-size: 14px;
    text-align: center;
}

.area-box {
    height: 119px;
    background: #2b2b2b;
    padding: 3px 1px;
    box-sizing: border-box;
    flex: none;
}

.area-item {
    height: 19px;
    box-sizing: border-box;
    border: 1px solid #6c6c6c;
    display: flex;
    justify-content: space-between;
    align-items: center;
    padding: 0 6px;
    white-space: nowrap;
}

.area-item .small-chev { margin: 0; }

.pane-foot {
    margin-top: 19px;
    display: flex;
    align-items: center;
    margin-left: 5px;
}

.defer-box {
    width: 13px;
    height: 13px;
    border: 1px solid #777;
    border-radius: 3px;
    background: #2b2b2b;
    margin-right: 7px;
}

.update {
    margin-left: auto;
    width: 50px;
    height: 25px;
    box-sizing: border-box;
    border: 1px solid #4d4d4d;
    background: #1e1e1e;
    color: #5c5c5c;
    text-align: center;
    line-height: 23px;
}

/* Status bar */
.status {
    height: 23px;
    background: #141414;
    border-top: 1px solid #333;
    box-sizing: border-box;
    padding-bottom: 2px;
    display: flex;
    align-items: center;
    font-size: 10.7px;
    position: relative;
    white-space: nowrap;
}

.st-ready { margin-left: 11px; width: 51px; }

.st-acc {
    width: 15px;
    height: 15px;
    color: #ddd;
}

.st-acc-text {
    margin-left: 3px;
    font-size: 10.4px;
    font-weight: 600;
    width: 1232px;
}

.st-avg { width: 126px; }
.st-count { width: 72px; }
.st-sum { width: 110px; }

.st-view {
    width: 40px;
    height: 22px;
    display: flex;
    align-items: center;
    justify-content: center;
}

.st-view-on { background: #2b2b2b; }

.st-view svg {
    width: 14px;
    height: 14px;
    color: #ddd;
}

.zoomer {
    display: flex;
    align-items: center;
    margin-left: 8px;
}

.z-minus {
    width: 8px;
    height: 1px;
    background: #ccc;
}

.z-track {
    width: 100px;
    height: 1px;
    background: #aaa;
    margin: 0 5px;
    position: relative;
}

.z-track i {
    position: absolute;
    left: 46px;
    top: -5px;
    width: 5px;
    height: 11px;
    background: #aaa;
}

.z-plus {
    font-size: 14px;
    color: #ccc;
    line-height: 1;
}

.z-val { margin-left: 12px; }

/* Dialog */
.dialog {
    position: absolute;
    left: 770px;
    top: 307px;
    width: 234px;
    height: 291px;
    box-sizing: border-box;
    background: #f3f3f3;
    border: 1px solid #b5b5b5;
    border-radius: 8px;
    box-shadow: 0 6px 22px rgba(0, 0, 0, 0.35);
    color: #1a1a1a;
    font-size: 11.5px;
}

.dlg-title {
    height: 39px;
    box-sizing: border-box;
    padding: 0 0 12px 8px;
    background: #eff1f6;
    border-radius: 8px 8px 0 0;
    display: flex;
    align-items: center;
}

.dlg-title span { flex: 1; }

.dlg-title b {
    font-weight: normal;
    font-size: 13px;
    margin-right: 36px;
}

.dlg-title svg {
    width: 11px;
    height: 11px;
    margin-right: 17px;
    color: #222;
}

.dlg-list {
    margin-left: 5px;
    width: 222px;
    height: 218px;
    box-sizing: border-box;
    background: #363636;
    border: 1px solid #6a6a6a;
    padding: 7px 7px 0;
    color: #f0f0f0;
}

.dlg-row {
    height: 19px;
    box-sizing: border-box;
    padding-bottom: 5px;
    display: flex;
    align-items: center;
    margin-bottom: 2px;
}

.dlg-row i {
    width: 11px;
    height: 11px;
    border: 1px solid #a0a0a0;
    background: #444;
    margin: 2px 7px 0 1px;
}

.dlg-row-on {
    background: #217346;
    outline: 1px dotted #cfcfcf;
    outline-offset: -1px;
}

.dlg-btns {
    display: flex;
    justify-content: flex-end;
    gap: 11px;
    margin: 4px 6px 0 0;
}

.dlg-btn {
    width: 73px;
    height: 21px;
    box-sizing: border-box;
    background: #fdfdfd;
    border: 1px solid #cfcfcf;
    border-radius: 4px;
    text-align: center;
    line-height: 19px;
}

.dlg-off { color: #8a8a8a; }

.dlg-grip {
    position: absolute;
    right: 0;
    bottom: 0;
    width: 9px;
    height: 9px;
    fill: #9a9a9a;
    stroke: none;
}

/* Red markup */
.markbox {
    position: absolute;
    left: 573px;
    top: 71px;
    width: 76px;
    height: 114px;
    box-sizing: border-box;
    border: 4px solid #e00000;
}

.markline {
    position: absolute;
    left: 0;
    top: 0;
    width: 1917px;
    height: 1033px;
    stroke: #d80000;
    stroke-width: 1.2;
    pointer-events: none;
}
```
